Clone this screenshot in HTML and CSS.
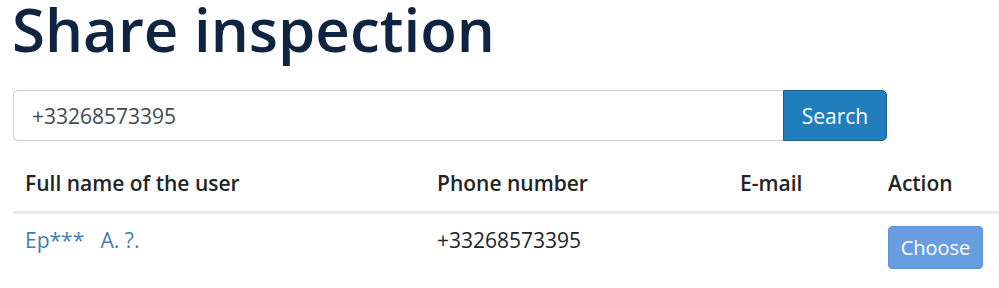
FILE: index.html
```html
<!DOCTYPE html>
<html lang="en">
<head>
<meta charset="utf-8">
<title>Share inspection</title>
<link rel="stylesheet" href="styles.css">
</head>
<body>
<main class="page">
  <h1 class="title">Share inspection</h1>
  <form class="search" onsubmit="return false">
    <input class="search-input" type="text" value="+33268573395">
    <button class="search-btn" type="submit">Search</button>
  </form>
  <table class="users">
    <thead>
      <tr>
        <th class="col-name">Full name of the user</th>
        <th class="col-phone">Phone number</th>
        <th class="col-email">E-mail</th>
        <th class="col-action">Action</th>
      </tr>
    </thead>
    <tbody>
      <tr>
        <td><a class="user-link" href="#">Ep***&nbsp;&nbsp; A. ?.</a></td>
        <td>+33268573395</td>
        <td></td>
        <td><button class="choose-btn" type="button">Choose</button></td>
      </tr>
    </tbody>
  </table>
</main>
</body>
</html>
```

FILE: styles.css
```css
html, body {
  margin: 0;
  padding: 0;
  background: #ffffff;
  overflow: hidden;
}
body {
  font-family: "Open Sans", "Noto Sans", "DejaVu Sans", sans-serif;
  font-size: 21px;
  color: #212529;
}
.page {
  padding: 0 0 0 13px;
  width: 1000px;
}
.title {
  margin: 0 0 0 -1px;
  font-size: 60px;
  line-height: 58px;
  font-weight: 600;
  color: #0e2440;
  letter-spacing: 0;
}
.search {
  display: flex;
  margin-top: 32px;
  width: 874px;
}
.search-input {
  flex: 1;
  height: 51px;
  box-sizing: border-box;
  border: 1px solid #c6cfdb;
  border-right: none;
  border-radius: 5px 0 0 5px;
  padding: 0 18px;
  font-family: inherit;
  font-size: 21px;
  color: #444b52;
  outline: none;
}
.search-btn {
  width: 104px;
  height: 51px;
  box-sizing: border-box;
  background: #217ebd;
  border: 1px solid #1a5b8a;
  border-radius: 0 5px 5px 0;
  color: #ffffff;
  font-family: inherit;
  font-size: 21px;
  padding: 0;
}
.users {
  border-collapse: collapse;
  margin-top: 12px;
  width: 1000px;
  table-layout: fixed;
}
.col-name { width: 388px; }
.col-phone { width: 279px; }
.col-email { width: 124px; }
.users th {
  text-align: left;
  font-weight: 600;
  font-size: 21px;
  padding: 16px 12px 14px;
  border-bottom: 3px solid #e6ebf1;
  color: #212529;
}
.users td {
  font-size: 21px;
  padding: 12px 12px;
  vertical-align: top;
  color: #212529;
}
.user-link {
  color: #3b7fc0;
  text-decoration: none;
}
.choose-btn {
  width: 95px;
  height: 43px;
  background: #689ee0;
  border: 1px solid #5d93da;
  border-radius: 4px;
  color: #ffffff;
  font-family: inherit;
  font-size: 20px;
  padding: 0;
}
```
